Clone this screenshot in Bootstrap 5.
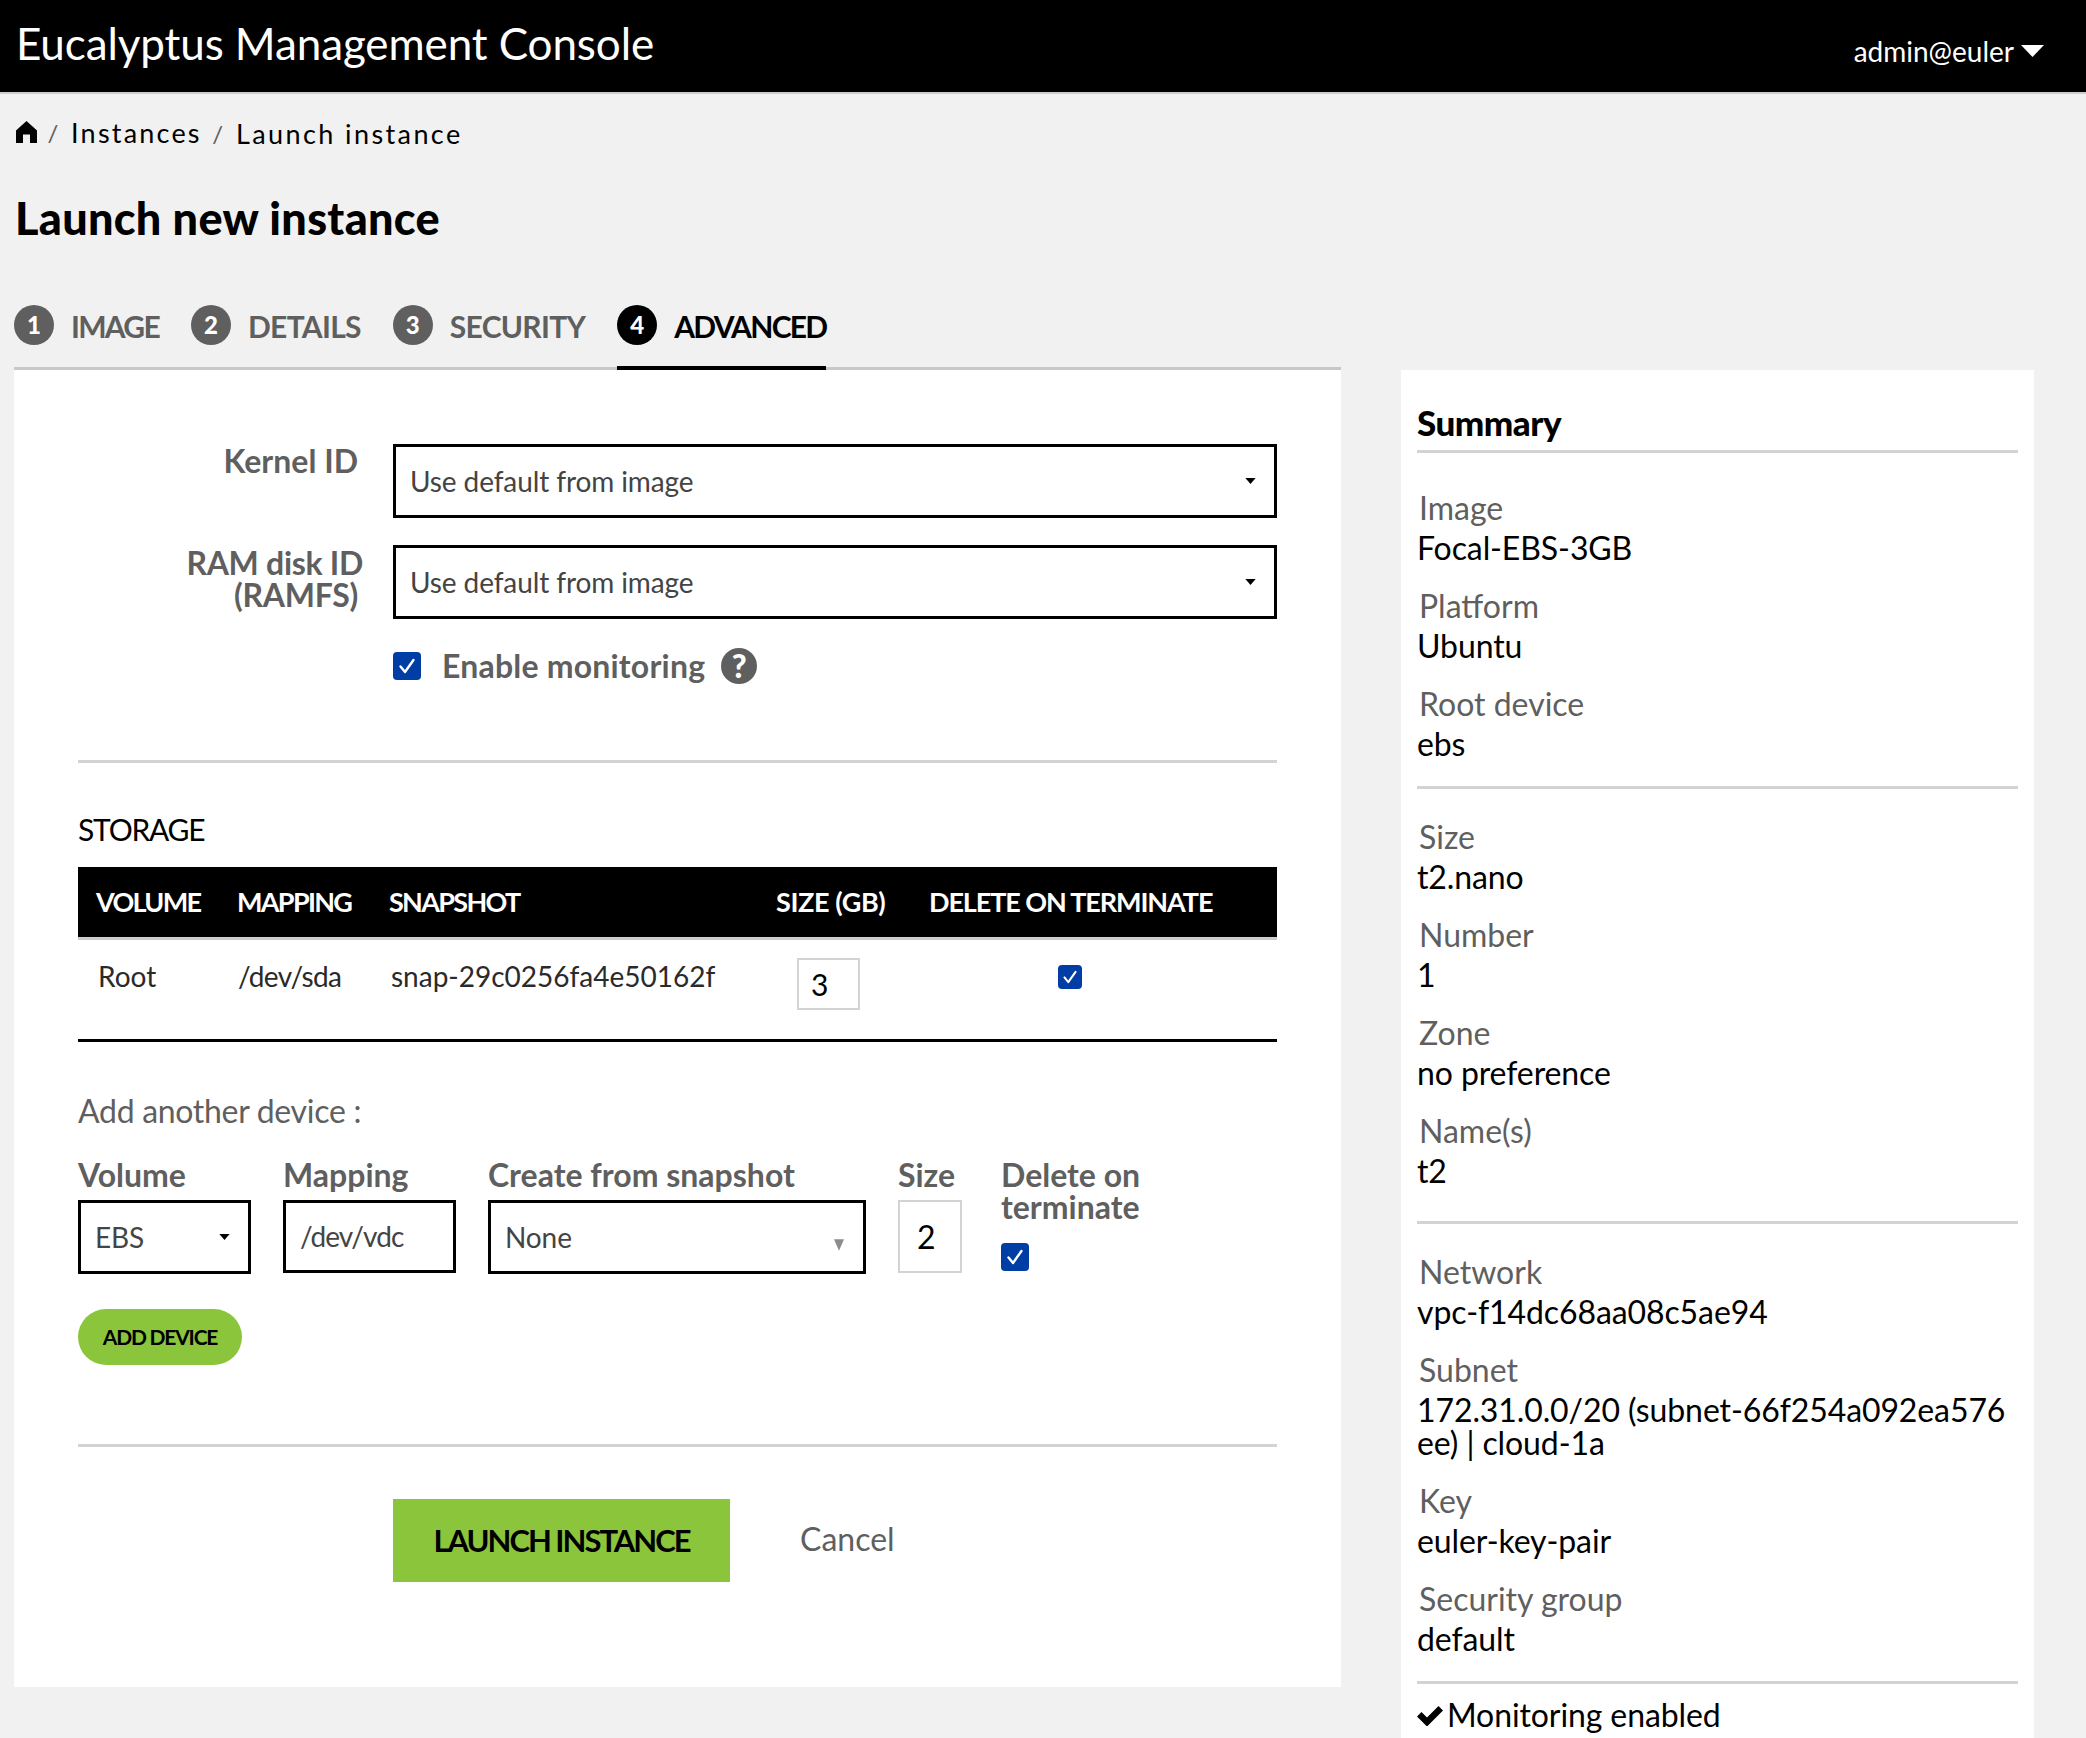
<!DOCTYPE html>
<html lang="en">
<head>
<meta charset="utf-8">
<title>Launch new instance</title>
<link href="https://cdn.jsdelivr.net/npm/bootstrap@5.3.0/dist/css/bootstrap.min.css" rel="stylesheet">
<style>
html,body{height:1738px;overflow:hidden}
body{background:#f1f1f1;font-family:"Lato","Liberation Sans",sans-serif;color:#000;font-size:32px}
.topbar{background:#000;height:94px;border-bottom:2px solid #ccc;padding:0 42px 0 16px;color:#fff}
.brand-title{font-size:44px;line-height:1;margin-top:-6px;color:#fff;letter-spacing:-.1px}
.user-menu{font-size:28px;color:#fff;text-decoration:none;margin-top:9px;line-height:1}
.user-caret{width:23px;height:12px;margin-left:7px;fill:#fff}
.pagewrap{padding:0 0 0 14px}
.crumbs{margin:0;padding:21px 0 0 2px;font-size:27px;letter-spacing:2.2px;line-height:32px;height:56px;--bs-breadcrumb-divider:"/"}
.crumbs .breadcrumb-item a{color:#000;text-decoration:none}
.crumbs .breadcrumb-item{color:#000;padding-left:0;align-items:center}
.crumbs .breadcrumb-item+.breadcrumb-item{padding-left:0}
.crumbs .breadcrumb-item+.breadcrumb-item::before{color:#5f5f5f;padding:0 10.5px;float:none;font-size:24px}
.crumbs .crumb-last{margin-top:2px;letter-spacing:2.4px}
.home-ico{width:21px;height:22px;fill:#000;display:block;margin-top:-1px}
.page-title{font-size:45px;font-weight:900;letter-spacing:.3px;margin:41px 0 0 1px;line-height:54px;color:#000}
.steps{width:1327px;margin-top:53px;border-bottom:3px solid #c8c8c8;gap:32px;height:72px;flex-wrap:nowrap}
.steps .step-link{display:flex;align-items:flex-start;gap:17px;color:#5f5f5f;font-size:30px;font-weight:700;letter-spacing:-1.7px;padding:8px 0 0;height:72px;border-bottom:4px solid transparent;text-decoration:none}
.steps .step-link.step-wide{letter-spacing:-.7px}
.steps .step-link span.step-txt{line-height:40px;margin-top:0}
.steps .step-num{width:40px;height:40px;border-radius:50%;background:#5f5f5f;color:#fff;font-size:24px;font-weight:900;letter-spacing:0;display:flex;align-items:center;justify-content:center;margin-top:-1px}
.steps .step-link.on{color:#000;border-bottom-color:#000}
.steps .step-link.on .step-num{background:#000}
.work{align-items:flex-start;gap:60px}
.panel-main{width:1327px;height:1317px;background:#fff;padding:74px 64px 0;flex:none}
.panel-side{width:633px;background:#fff;padding:32px 16px 60px;flex:none}
.flabel{font-weight:700;color:#5f5f5f;font-size:32px;letter-spacing:0;line-height:32px;margin:0}
.side-label{width:280px;text-align:right;flex:none;padding-top:1px}
.side-label-2{padding-top:2px;letter-spacing:-.3px}
.over-r{margin-right:-5px}
.fieldrow{gap:35px}
.fieldrow-first{margin-bottom:27px}
.sel-box{border:3px solid #000;border-radius:0;height:74px;font-size:28px;letter-spacing:-.1px;color:#444;padding:0 40px 0 14px;background-image:url("data:image/svg+xml,%3Csvg xmlns='http://www.w3.org/2000/svg' viewBox='0 0 12 7'%3E%3Cpath d='M0 0h12L6 7z' fill='%23000'/%3E%3C/svg%3E");background-size:11px 6px;background-position:right 18px center}
.sel-box:focus{border-color:#000;box-shadow:none}
.sel-wide{width:884px}
.form-check-input.chk[type=checkbox]{width:28px;height:28px;margin:0;border-radius:4px;background-color:#003da5;border:0;flex:none;background-size:100%;background-image:url("data:image/svg+xml,%3Csvg xmlns='http://www.w3.org/2000/svg' viewBox='0 0 28 28'%3E%3Cpath d='M7.5 14.5l4.5 5.5 8.5-12' fill='none' stroke='%23fff' stroke-width='2.4' stroke-linecap='round' stroke-linejoin='round'/%3E%3C/svg%3E")}
.form-check-input.chk.chk-sm[type=checkbox]{width:24px;height:24px}
.form-check-input.chk.chk-block[type=checkbox]{display:block}
.chkrow{margin:29px 0 76px 315px}
.chk-text{margin-left:21px;letter-spacing:.2px}
.help-dot{width:36px;height:36px;border-radius:50%;background:#5f5f5f;color:#fff;font-size:32px;font-weight:900;display:flex;align-items:center;justify-content:center;flex:none;line-height:1}
.rule{border:0;border-top:3px solid #d3d3d3;opacity:1;margin:0}
.rule-b{margin-top:79px}
.sect-title{font-size:30px;line-height:36px;margin:48px 0 20px;color:#000;letter-spacing:-1.2px}
.dev-table{margin:0;--bs-table-bg:#fff;table-layout:fixed;width:100%}
.col-a{width:141px}.col-b{width:152px}.col-c{width:387px}.col-d{width:153px}
.dev-table thead th{background:#000;color:#fff;font-size:27px;font-weight:700;letter-spacing:-1.7px;height:71px;padding:0 0 0 18px;vertical-align:middle;border-bottom:3px solid #ccc;white-space:nowrap}
.dev-table thead th.th-loose{letter-spacing:-.4px}
.dev-table thead th.th-mid{letter-spacing:-1.1px}
.dev-table tbody td{font-size:28px;color:#2a2a2a;height:102px;padding:15px 0 0 20px;vertical-align:top;border-bottom:3px solid #000;letter-spacing:0}
.dev-table tbody td.cell-map{padding-left:19px;letter-spacing:-.6px}
.dev-table tbody td.cell-size{padding:18px 0 0 39px}
.dev-table tbody td.cell-del{padding:25px 48px 0 0;text-align:center}
.num-in{border:2px solid #d3d3d3;border-radius:0;font-size:30px;padding:0 12px;color:#000;background:#fff}
.num-a{width:63px;height:52px;display:block}
.num-b{width:64px;height:73px;padding:0 17px;font-size:32px}
.add-title{font-size:32px;color:#5f5f5f;line-height:36px;margin:51px 0 30px;letter-spacing:-.3px}
.devform{gap:32px;align-items:flex-start}
.devform .flabel{margin-bottom:8px}
.devform .f-del .flabel{margin-bottom:20px}
.lab-row{height:33px}
.f-vol{width:173px}.f-map{width:173px}.f-snap{width:378px}.f-size{width:71px}.f-del{width:180px}
.txt-in{border:3px solid #000;border-radius:0;height:73px;font-size:28px;color:#444;padding:0 14px;background:#fff;letter-spacing:-.9px}
.sel-snap{background-image:url("data:image/svg+xml,%3Csvg xmlns='http://www.w3.org/2000/svg' viewBox='0 0 12 14'%3E%3Cpath d='M0 0h12L6 14z' fill='%238c8c8c'/%3E%3C/svg%3E");background-size:10px 12px;background-position:right 19px top 36px}
.btn-add{background:#8bc53c;border:0;border-radius:28px;color:#000;font-weight:700;font-size:21px;letter-spacing:-1.2px;width:164px;height:56px;padding:0;margin-top:35px}
.btn-add:hover,.btn-go:hover{background:#8bc53c;color:#000}
.btn-go{background:#8bc53c;border:0;border-radius:0;color:#000;font-weight:700;font-size:31px;letter-spacing:-2px;width:337px;height:83px;padding:0}
.cancel-lnk{color:#5f5f5f;font-size:32px;text-decoration:none;margin:-3px 0 0 70px}
.act-row{margin:52px 0 0 315px}
.sum-title{font-size:35px;font-weight:900;line-height:40px;letter-spacing:-.5px;padding-bottom:8px;border-bottom:3px solid #d3d3d3;margin:0 0 35px}
.sum-item{margin-bottom:22px}
.sum-k{color:#5f5f5f;font-size:32px;line-height:40px;padding-left:2px}
.sum-v{color:#000;font-size:32px;line-height:33px;word-break:break-all;margin-top:3px;letter-spacing:-.1px}
.sum-group{border-bottom:3px solid #d3d3d3;padding-bottom:4px;margin-bottom:28px}
.sum-group-mid{padding-bottom:12px}
.sum-group-last{margin-bottom:14px}
.tick-row{gap:4px}
.tick-ico{width:26px;height:22px;fill:#000;flex:none}
</style>
</head>
<body>
<nav class="topbar d-flex justify-content-between align-items-center">
  <div class="brand-title">Eucalyptus Management Console</div>
  <a href="#" class="user-menu d-flex align-items-center">admin@euler<svg class="user-caret" viewBox="0 0 23 12"><path d="M0 0h23L11.5 12z"/></svg></a>
</nav>
<div class="pagewrap">
  <ol class="breadcrumb crumbs">
    <li class="breadcrumb-item d-flex"><a href="#"><svg class="home-ico" viewBox="0 0 21 22"><path d="M10.5 0 21 9.5V22h-7v-8.5H7V22H0V9.5z"/></svg></a></li>
    <li class="breadcrumb-item d-flex"><a href="#">Instances</a></li>
    <li class="breadcrumb-item d-flex active crumb-last">Launch instance</li>
  </ol>
  <h1 class="page-title">Launch new instance</h1>
  <div class="nav steps">
    <a class="step-link" href="#"><span class="step-num">1</span><span class="step-txt">IMAGE</span></a>
    <a class="step-link step-wide" href="#"><span class="step-num">2</span><span class="step-txt">DETAILS</span></a>
    <a class="step-link step-wide" href="#"><span class="step-num">3</span><span class="step-txt">SECURITY</span></a>
    <a class="step-link on" href="#"><span class="step-num">4</span><span class="step-txt">ADVANCED</span></a>
  </div>
  <div class="d-flex work">
    <main class="panel-main">
      <div class="d-flex fieldrow fieldrow-first">
        <label class="flabel side-label">Kernel ID</label>
        <select class="form-select sel-box sel-wide"><option>Use default from image</option></select>
      </div>
      <div class="d-flex fieldrow">
        <label class="flabel side-label side-label-2"><span class="over-r">RAM disk ID</span><br>(RAMFS)</label>
        <select class="form-select sel-box sel-wide"><option>Use default from image</option></select>
      </div>
      <div class="d-flex align-items-center chkrow">
        <input class="form-check-input chk" type="checkbox" checked>
        <label class="flabel chk-text">Enable monitoring</label>
        <span class="help-dot ms-3">?</span>
      </div>
      <hr class="rule">
      <div class="sect-title">STORAGE</div>
      <table class="table dev-table">
        <colgroup><col class="col-a"><col class="col-b"><col class="col-c"><col class="col-d"><col></colgroup>
        <thead><tr><th>VOLUME</th><th>MAPPING</th><th>SNAPSHOT</th><th class="th-loose">SIZE (GB)</th><th class="th-mid">DELETE ON TERMINATE</th></tr></thead>
        <tbody><tr>
          <td>Root</td><td class="cell-map">/dev/sda</td><td>snap-29c0256fa4e50162f</td>
          <td class="cell-size"><input class="num-in num-a" value="3"></td>
          <td class="cell-del"><input class="form-check-input chk chk-sm" type="checkbox" checked></td>
        </tr></tbody>
      </table>
      <div class="add-title">Add another device :</div>
      <div class="d-flex devform">
        <div class="f-vol"><div class="flabel lab-row">Volume</div><select class="form-select sel-box"><option>EBS</option></select></div>
        <div class="f-map"><div class="flabel lab-row">Mapping</div><input class="txt-in w-100" value="/dev/vdc"></div>
        <div class="f-snap"><div class="flabel lab-row">Create from snapshot</div><select class="form-select sel-box sel-snap"><option>None</option></select></div>
        <div class="f-size"><div class="flabel lab-row">Size</div><input class="num-in num-b" value="2"></div>
        <div class="f-del"><div class="flabel">Delete on<br>terminate</div><input class="form-check-input chk chk-block" type="checkbox" checked></div>
      </div>
      <button class="btn btn-add">ADD DEVICE</button>
      <hr class="rule rule-b">
      <div class="d-flex align-items-center act-row">
        <button class="btn btn-go">LAUNCH INSTANCE</button>
        <a href="#" class="cancel-lnk">Cancel</a>
      </div>
    </main>
    <aside class="panel-side">
      <h2 class="sum-title">Summary</h2>
      <div class="sum-group">
        <div class="sum-item"><div class="sum-k">Image</div><div class="sum-v">Focal-EBS-3GB</div></div>
        <div class="sum-item"><div class="sum-k">Platform</div><div class="sum-v">Ubuntu</div></div>
        <div class="sum-item"><div class="sum-k">Root device</div><div class="sum-v">ebs</div></div>
      </div>
      <div class="sum-group sum-group-mid">
        <div class="sum-item"><div class="sum-k">Size</div><div class="sum-v">t2.nano</div></div>
        <div class="sum-item"><div class="sum-k">Number</div><div class="sum-v">1</div></div>
        <div class="sum-item"><div class="sum-k">Zone</div><div class="sum-v">no preference</div></div>
        <div class="sum-item"><div class="sum-k">Name(s)</div><div class="sum-v">t2</div></div>
      </div>
      <div class="sum-group sum-group-last">
        <div class="sum-item"><div class="sum-k">Network</div><div class="sum-v">vpc-f14dc68aa08c5ae94</div></div>
        <div class="sum-item"><div class="sum-k">Subnet</div><div class="sum-v">172.31.0.0/20 (subnet-66f254a092ea576ee) | cloud-1a</div></div>
        <div class="sum-item"><div class="sum-k">Key</div><div class="sum-v">euler-key-pair</div></div>
        <div class="sum-item"><div class="sum-k">Security group</div><div class="sum-v">default</div></div>
      </div>
      <div class="d-flex align-items-center tick-row sum-v"><svg class="tick-ico" viewBox="0 0 26 22"><path d="M0 12.5 4.5 8 10 13.5 21.5 2 26 6.5 10 22.5z"/></svg>Monitoring enabled</div>
    </aside>
  </div>
</div>
<script src="https://cdn.jsdelivr.net/npm/bootstrap@5.3.0/dist/js/bootstrap.bundle.min.js"></script>
</body>
</html>
